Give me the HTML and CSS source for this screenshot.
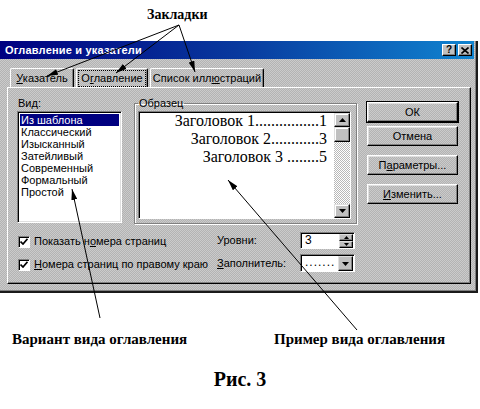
FILE: index.html
```html
<!DOCTYPE html>
<html lang="ru">
<head>
<meta charset="utf-8">
<title>Рис. 3</title>
<link rel="stylesheet" href="styles.css">
</head>
<body>
<div class="page">
  <div class="note-top">Закладки</div>

  <div class="dialog">
    <div class="titlebar">
      <span class="title">Оглавление и указатели</span>
      <div class="caption-btns">
        <span class="cbtn">?</span>
        <span class="cbtn"><svg width="8" height="7" viewBox="0 0 8 7"><path d="M0.5 0.5 L7.5 6.5 M7.5 0.5 L0.5 6.5" stroke="#000" stroke-width="1.6"/></svg></span>
      </div>
    </div>

    <div class="dialog-body">
      <div class="tabs">
        <div class="tab tab-index"><span><u>У</u>казатель</span></div>
        <div class="tab tab-toc"><span class="focus">О<u>г</u>лавление</span></div>
        <div class="tab tab-figs"><span>Список илл<u>ю</u>страций</span></div>
      </div>

      <div class="panel">
        <div class="top-row">
          <div class="vid">
            <div class="label">Вид:</div>
            <ul class="listbox">
              <li class="sel">Из шаблона</li>
              <li>Классический</li>
              <li>Изысканный</li>
              <li>Затейливый</li>
              <li>Современный</li>
              <li>Формальный</li>
              <li>Простой</li>
            </ul>
          </div>

          <fieldset class="sample">
            <legend>Образец</legend>
            <div class="preview">
              <div class="preview-text">
                <div class="toc">Заголовок 1................1</div>
                <div class="toc">Заголовок 2............3</div>
                <div class="toc">Заголовок 3 ........5</div>
              </div>
              <div class="scrollbar">
                <div class="sb-btn"><svg width="7" height="4" viewBox="0 0 7 4"><path d="M3.5 0 L7 4 L0 4 Z"/></svg></div>
                <div class="sb-thumb"></div>
                <div class="sb-track"></div>
                <div class="sb-btn"><svg width="7" height="4" viewBox="0 0 7 4"><path d="M0 0 L7 0 L3.5 4 Z"/></svg></div>
              </div>
            </div>
          </fieldset>

          <div class="buttons">
            <button class="btn default">ОК</button>
            <button class="btn">Отмена</button>
            <button class="btn spaced">П<u>а</u>раметры...</button>
            <button class="btn spaced"><u>И</u>зменить...</button>
          </div>
        </div>

        <div class="bottom">
          <div class="check"><span class="box"><svg width="8" height="7" viewBox="0 0 8 7"><path d="M0.5 3.5 L3 6 L7.5 0.8" stroke="#000" stroke-width="1.7" fill="none"/></svg></span><span>Показать н<u>о</u>мера страниц</span></div>
          <span class="flabel">Уровни:</span>
          <div class="spin">
            <span class="val">3</span>
            <div class="spin-btns">
              <span class="sp"><svg width="5" height="3" viewBox="0 0 5 3"><path d="M2.5 0 L5 3 L0 3 Z"/></svg></span>
              <span class="sp"><svg width="5" height="3" viewBox="0 0 5 3"><path d="M0 0 L5 0 L2.5 3 Z"/></svg></span>
            </div>
          </div>

          <div class="check"><span class="box"><svg width="8" height="7" viewBox="0 0 8 7"><path d="M0.5 3.5 L3 6 L7.5 0.8" stroke="#000" stroke-width="1.7" fill="none"/></svg></span><span><u>Н</u>омера страниц по правому краю</span></div>
          <span class="flabel"><u>З</u>аполнитель:</span>
          <div class="combo">
            <span class="val dots">.......</span>
            <span class="drop"><svg width="7" height="4" viewBox="0 0 7 4"><path d="M0 0 L7 0 L3.5 4 Z"/></svg></span>
          </div>
        </div>
      </div>
    </div>
  </div>

  <div class="notes-bottom">
    <span class="note-left">Вариант вида оглавления</span>
    <span class="note-right">Пример вида оглавления</span>
  </div>
  <div class="fig">Рис. 3</div>

  <svg class="arrows" width="480" height="409" viewBox="0 0 480 409">
    <defs>
      <marker id="ah" markerUnits="userSpaceOnUse" markerWidth="11" markerHeight="6" refX="11" refY="3" orient="auto">
        <path d="M0 0 L11 3 L0 6 Z" fill="#000"/>
      </marker>
    </defs>
    <g stroke="#000" stroke-width="1" fill="none">
      <line x1="179" y1="25" x2="47" y2="76" marker-end="url(#ah)"/>
      <line x1="179" y1="25" x2="116" y2="73" marker-end="url(#ah)"/>
      <line x1="179" y1="25" x2="195" y2="72" marker-end="url(#ah)"/>
      <line x1="100" y1="318" x2="72" y2="189" marker-end="url(#ah)"/>
      <line x1="357" y1="330" x2="228" y2="180" marker-end="url(#ah)"/>
    </g>
  </svg>
</div>
</body>
</html>
```

FILE: styles.css
```css
* { box-sizing: border-box; }

html, body {
  margin: 0;
  padding: 0;
  background: #fff;
}

body {
  width: 480px;
  height: 409px;
  overflow: hidden;
  font-family: "Liberation Sans", Arial, sans-serif;
  color: #000;
}

.page {
  position: relative;
  width: 480px;
  height: 409px;
}

.note-top {
  height: 41px;
  padding: 7px 0 0 147px;
  font: bold 14px/16px "Liberation Serif", "Times New Roman", serif;
}

/* ---------- dialog ---------- */
.dialog {
  width: 478px;
  height: 252px;
  background: repeating-conic-gradient(#cbcbcb 0 25%, #b3b3b3 0 50%) 0 0 / 2px 2px;
  border-right: 2px solid #1a1a1a;
  border-bottom: 2px solid #1a1a1a;
  box-shadow: inset -1px -1px 0 #808080;
  font-size: 11px;
  line-height: 13px;
}

.titlebar {
  height: 18px;
  margin-right: 2px;
  display: flex;
  align-items: center;
  justify-content: space-between;
  padding: 0 2px 0 5px;
  background: linear-gradient(90deg, #000080 0%, #08399e 50%, #1084d0 100%);
}

.title {
  color: #fff;
  font-weight: bold;
  font-size: 11px;
  letter-spacing: 0.2px;
}

.caption-btns {
  display: flex;
  gap: 2px;
}

.cbtn {
  width: 14px;
  height: 12px;
  display: flex;
  align-items: center;
  justify-content: center;
  background: #c0c0c0;
  border: 1px solid;
  border-color: #fff #000 #000 #fff;
  box-shadow: inset -1px -1px 0 #808080;
  font: bold 10px/1 "Liberation Sans", Arial, sans-serif;
}

.dialog-body {
  padding: 9px 5px 0 7px;
}

/* ---------- tabs ---------- */
.tabs {
  display: flex;
  gap: 2px;
  margin-left: 3px;
  height: 19px;
}

.tab {
  height: 19px;
  display: flex;
  align-items: center;
  justify-content: center;
  border-top: 1px solid #fff;
  border-left: 1px solid #fff;
  border-right: 1px solid #000;
  border-radius: 2px 2px 0 0;
  box-shadow: inset -1px 0 0 #808080;
}

.tab-index { width: 64px; }
.tab-toc { width: 72px; }
.tab-figs { width: 114px; }

.focus {
  outline: 1px dotted #000;
  outline-offset: 1px;
  padding: 0 1px;
}

/* ---------- panel ---------- */
.panel {
  height: 197px;
  border: 1px solid;
  border-color: #fff #000 #000 #fff;
  box-shadow: inset -1px -1px 0 #808080;
  padding: 9px 0 0 9px;
}

.top-row {
  display: flex;
  align-items: flex-start;
  height: 127px;
}

.vid { width: 105px; }

.label { height: 13px; padding-left: 1px; }

.listbox {
  list-style: none;
  margin: 1px 0 0;
  height: 112px;
  padding: 2px;
  background: #fff;
  border: 1px solid;
  border-color: #808080 #fff #fff #808080;
  box-shadow: inset 1px 1px 0 #000, inset -1px -1px 0 #dfdfdf;
}

.listbox li {
  height: 12px;
  line-height: 12px;
  padding-left: 1px;
}

.listbox li.sel {
  background: #000080;
  color: #fff;
}

/* sample group */
.sample {
  margin: 0 0 0 12px;
  width: 223px;
  padding: 1px 5px 4px 3px;
  border: 1px solid #808080;
  box-shadow: 1px 1px 0 #fff, inset 1px 1px 0 #fff;
}

.sample legend {
  padding: 0 1px;
  margin: 0;
  font-size: 11px;
  line-height: 13px;
}

.preview {
  height: 108px;
  display: flex;
  background: #fff;
  border: 1px solid;
  border-color: #808080 #fff #fff #808080;
  box-shadow: inset 1px 1px 0 #000;
}

.preview-text {
  flex: 1;
  padding: 0 7px 0 0;
  font: 16px/18px "Liberation Serif", "Times New Roman", serif;
  text-align: right;
  white-space: nowrap;
}

.scrollbar {
  width: 16px;
  display: flex;
  flex-direction: column;
  border-top: 1px solid #000;
}

.sb-btn, .sb-thumb {
  height: 14px;
  display: flex;
  align-items: center;
  justify-content: center;
  background: #c0c0c0;
  border: 1px solid;
  border-color: #dfdfdf #000 #000 #dfdfdf;
  box-shadow: inset -1px -1px 0 #808080, inset 1px 1px 0 #fff;
}

.sb-thumb { height: 15px; }

.sb-track {
  flex: 1;
  background: repeating-conic-gradient(#ffffff 0 25%, #b8b8b8 0 50%) 0 0 / 2px 2px;
}

/* buttons */
.buttons {
  margin-left: 10px;
  width: 91px;
  padding-top: 5px;
  display: flex;
  flex-direction: column;
  gap: 4px;
}

.btn {
  display: block;
  width: 91px;
  height: 20px;
  padding: 0;
  font: 11px/13px "Liberation Sans", Arial, sans-serif;
  color: #000;
  background: transparent;
  border: 1px solid;
  border-color: #fff #000 #000 #fff;
  box-shadow: inset -1px -1px 0 #808080, inset 1px 1px 0 #dfdfdf;
}

.btn.default {
  box-shadow: 0 0 0 1px #000, inset -1px -1px 0 #808080, inset 1px 1px 0 #dfdfdf;
}

.btn.spaced { margin-top: 5px; }

/* bottom controls */
.bottom {
  display: grid;
  grid-template-columns: 200px 83px 55px;
  grid-template-rows: 18px 18px;
  row-gap: 5px;
  margin-top: 7px;
  align-items: center;
}

.check {
  display: flex;
  align-items: center;
  gap: 4px;
  padding-left: 1px;
  margin-top: 3px;
  white-space: nowrap;
}

.box {
  width: 12px;
  height: 12px;
  display: flex;
  align-items: center;
  justify-content: center;
  background: #fff;
  border: 1px solid;
  border-color: #808080 #fff #fff #808080;
  box-shadow: inset 1px 1px 0 #000;
}

.spin, .combo {
  height: 17px;
  display: flex;
  background: #fff;
  border: 1px solid;
  border-color: #808080 #fff #fff #808080;
  box-shadow: inset 1px 1px 0 #000;
}

.combo { height: 18px; }

.val {
  flex: 1;
  padding: 1px 0 0 4px;
  line-height: 13px;
  font-size: 12px;
}

.dots { letter-spacing: 1px; }

.spin-btns {
  width: 15px;
  display: flex;
  flex-direction: column;
  padding: 1px 1px 0 0;
}

.sp, .drop {
  flex: 1;
  display: flex;
  align-items: center;
  justify-content: center;
  background: #c0c0c0;
  border: 1px solid;
  border-color: #dfdfdf #000 #000 #dfdfdf;
  box-shadow: inset -1px -1px 0 #808080;
}

.drop {
  flex: 0 0 15px;
  margin: 1px 1px 0 0;
}

/* ---------- annotations ---------- */
.notes-bottom {
  display: flex;
  margin-top: 38px;
  height: 17px;
  font: bold 15px/17px "Liberation Serif", "Times New Roman", serif;
  white-space: nowrap;
}

.note-left { width: 274px; padding-left: 12px; }

.fig {
  margin-top: 20px;
  text-align: center;
  font: bold 20px/22px "Liberation Serif", "Times New Roman", serif;
}

.arrows {
  position: absolute;
  top: 0;
  left: 0;
  pointer-events: none;
}
```
